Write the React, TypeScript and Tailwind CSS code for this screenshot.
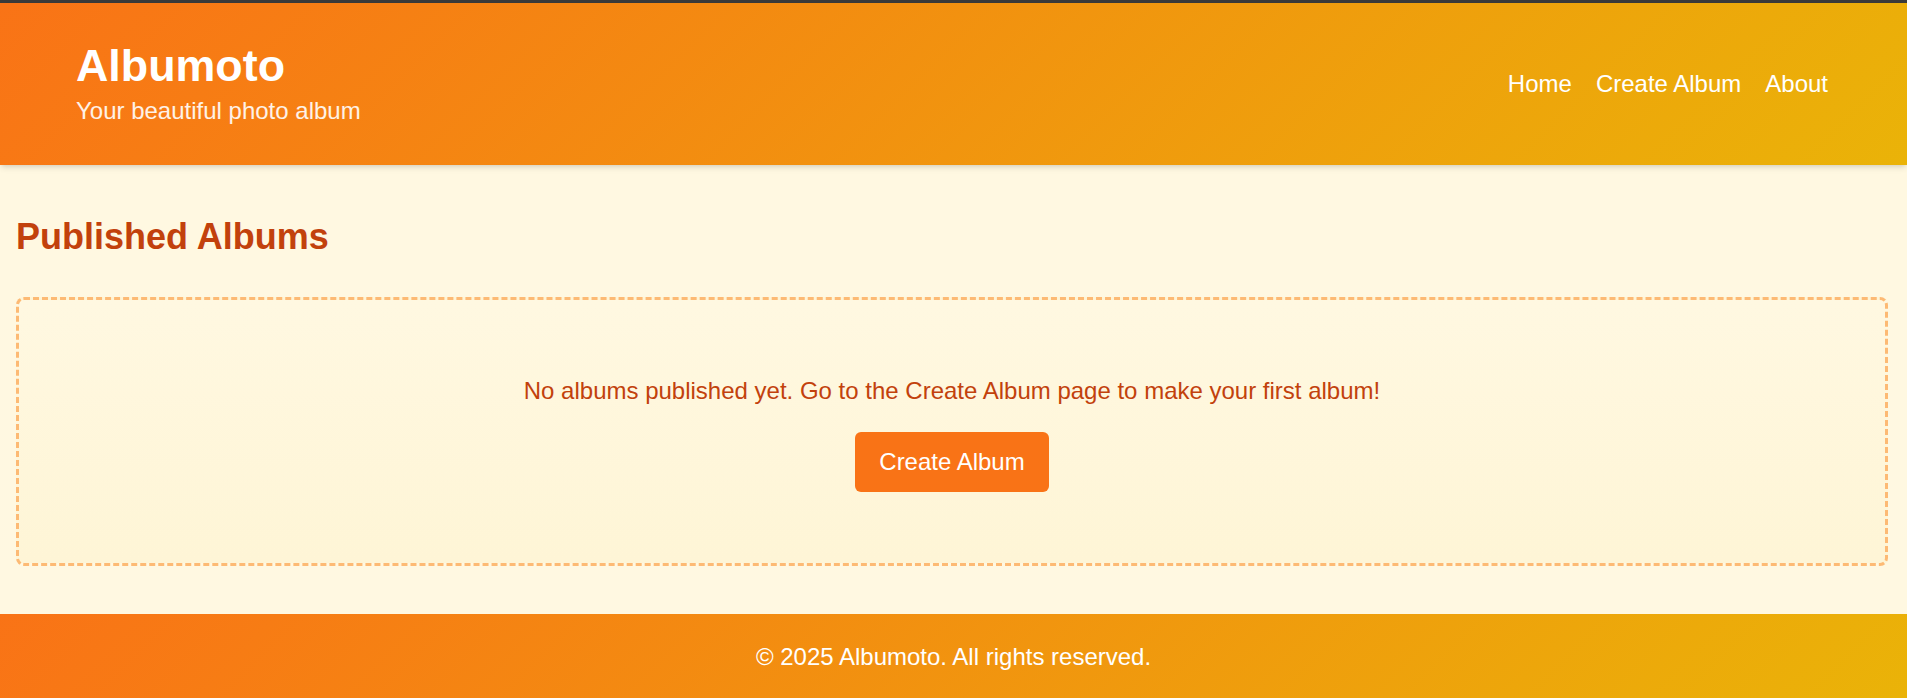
const navLinks = ["Home", "Create Album", "About"];

function Header() {
  return (
    <header className="flex h-[162px] items-center justify-between bg-[linear-gradient(135deg,#f97316,#eab308)] pl-[76px] pr-[79px] text-white shadow-md">
      <div className="-mt-[3px]">
        <h1 className="text-[44.8px] font-bold leading-[48px]">Albumoto</h1>
        <p className="mt-[8px] text-[24px] leading-[28px] text-white/90">
          Your beautiful photo album
        </p>
      </div>
      <nav className="flex gap-6 text-[24px] leading-[28px]">
        {navLinks.map((link) => (
          <a key={link} href="#" className="text-white">
            {link}
          </a>
        ))}
      </nav>
    </header>
  );
}

function EmptyState() {
  return (
    <div className="ml-4 mr-[19px] mt-10 flex flex-col items-center rounded-lg border-[3px] border-dashed border-[#fdba74] bg-[linear-gradient(180deg,#fff8e1,#fef5d6)] pb-[71px] pt-[77px]">
      <p className="text-[24px] leading-[28px] text-[#c2410c]">
        No albums published yet. Go to the Create Album page to make your first
        album!
      </p>
      <button className="mt-[27px] h-[60px] rounded-md bg-[#f97316] px-6 text-[24px] leading-[28px] text-white">
        Create Album
      </button>
    </div>
  );
}

export default function App() {
  return (
    <div className="min-h-screen bg-[#fff8e1] font-['Liberation_Sans',Arial,sans-serif]">
      <div className="h-[3px] bg-[#3a3a3a]" />
      <Header />

      <main className="pt-[51px]">
        <h2 className="px-4 text-[36px] font-bold leading-[41px] text-[#c2410c]">
          Published Albums
        </h2>
        <EmptyState />
      </main>

      <footer className="mt-[48px] bg-[linear-gradient(135deg,#f97316,#eab308)] pb-[27px] pt-[29px] text-center text-[24px] leading-[28px] text-white">
        © 2025 Albumoto. All rights reserved.
      </footer>
    </div>
  );
}
